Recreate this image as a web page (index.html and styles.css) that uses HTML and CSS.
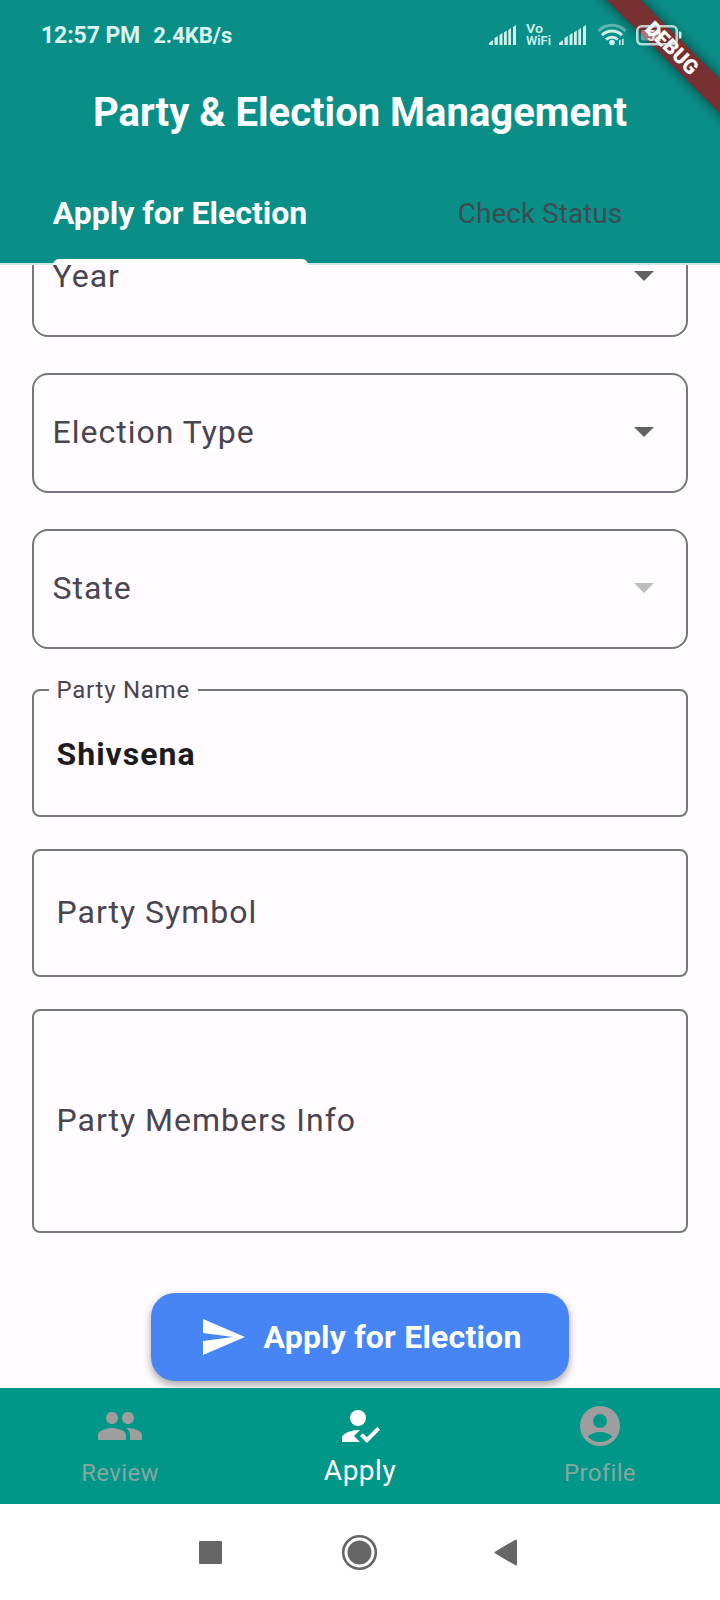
FILE: index.html
```html
<!DOCTYPE html>
<html lang="en">
<head>
<meta charset="utf-8">
<title>Party &amp; Election Management</title>
<link rel="stylesheet" href="styles.css">
</head>
<body>
<div class="screen">
  <header class="header">
    <div class="status">
      <span class="status-text time">12:57 PM</span>
      <span class="status-text speed">2.4KB/s</span>
      <svg class="status-icons" width="200" height="26" viewBox="0 0 200 26" fill="#cfeeea">
        <path d="M1 22v-2l4-3v5zM6.500 22v-7l3.300-2v9zM11.500 22V12l3-2v12zM16 22V9.500l2.800-2V22zM20.300 22V7l2.700-2v17zM25 22V4l3-2v20z"/>
        <text class="vo" x="38" y="10" textLength="17" lengthAdjust="spacingAndGlyphs">Vo</text>
        <text class="vo" x="38" y="22" textLength="25" lengthAdjust="spacingAndGlyphs">WiFi</text>
        <path transform="translate(70 0)" d="M1 22v-2l4-3v5zM6.500 22v-7l3.300-2v9zM11.500 22V12l3-2v12zM16 22V9.500l2.800-2V22zM20.300 22V7l2.700-2v17zM25 22V4l3-2v20z"/>
        <g fill="none" stroke="#cfeeea" stroke-width="3">
          <path d="M110.500 8a19 19 0 0 1 27 0" stroke="#5fb8b0"/>
          <path d="M114 12.300a14 14 0 0 1 20 0"/>
          <path d="M118 16.500a9 9 0 0 1 12 0"/>
        </g>
        <circle cx="124" cy="19.500" r="2.800"/>
        <path d="M131 17h1.600v5H131zM134 16h1.600v6H134z"/>
      </svg>
    </div>
    <h1 class="title">Party &amp; Election Management</h1>
    <nav class="tabs">
      <div class="tab active"><span>Apply for Election</span></div>
      <div class="tab"><span>Check Status</span></div>
    </nav>
  </header>
  <main class="form">
    <div class="field select first"><span>Year</span><i class="arrow"></i></div>
    <div class="field select"><span>Election Type</span><i class="arrow"></i></div>
    <div class="field select"><span>State</span><i class="arrow disabled"></i></div>
    <fieldset class="field input named"><legend>Party Name</legend><b>Shivsena</b></fieldset>
    <div class="field input"><span>Party Symbol</span></div>
    <div class="field input area"><span>Party Members Info</span></div>
    <button class="submit">
      <svg width="48" height="48" viewBox="0 0 24 24" fill="#fff"><path d="M2.010 21 23 12 2.010 3 2 10l15 2-15 2z"/></svg>
      <span>Apply for Election</span>
    </button>
  </main>
  <nav class="bottom">
    <div class="item">
      <svg width="48" height="48" viewBox="0 0 24 24"><path d="M16 11c1.660 0 2.990-1.340 2.990-3S17.660 5 16 5s-3 1.340-3 3 1.340 3 3 3zm-8 0c1.660 0 2.990-1.340 2.990-3S9.660 5 8 5 5 6.340 5 8s1.340 3 3 3zm0 2c-2.330 0-7 1.170-7 3.500V19h14v-2.500c0-2.330-4.670-3.500-7-3.500zm8 0c-.29 0-.62.020-.97.050 1.160.84 1.970 1.970 1.970 3.450V19h6v-2.500c0-2.330-4.670-3.500-7-3.500z"/></svg>
      <span>Review</span>
    </div>
    <div class="item on">
      <svg width="48" height="48" viewBox="0 0 24 24"><circle cx="11" cy="8" r="4"/><path d="M12 20H3v-2c0-2.660 5.330-4 8-4l1 .05L9 17zM15.470 20.500 12 17l1.400-1.410 2.070 2.080 5.130-5.170 1.400 1.410z"/></svg>
      <span>Apply</span>
    </div>
    <div class="item">
      <svg width="48" height="48" viewBox="0 0 24 24"><path fill-rule="evenodd" d="M12 2a10 10 0 1 0 0 20 10 10 0 0 0 0-20zm0 4a3.500 3.500 0 1 1 0 7 3.500 3.500 0 0 1 0-7zm0 14c-2.030 0-4.430-.82-6.140-2.880a9.950 9.950 0 0 1 12.280 0C16.430 19.180 14.030 20 12 20z"/></svg>
      <span>Profile</span>
    </div>
  </nav>
  <footer class="system">
    <svg width="720" height="96" viewBox="0 0 720 96" fill="#666">
      <rect x="199" y="37" width="23" height="23" rx="1"/>
      <circle cx="359.500" cy="48.500" r="12"/>
      <circle cx="359.500" cy="48.500" r="16.300" fill="none" stroke="#666" stroke-width="2.600"/>
      <path d="M495.500 48.500 516 36.500v24z" stroke="#666" stroke-width="2" stroke-linejoin="round"/>
    </svg>
  </footer>
  <div class="corner"><div class="ribbon">DEBUG</div></div>
  <svg class="battery" width="48" height="22" viewBox="0 0 48 22">
    <rect x="2.300" y="2.300" width="39.500" height="18" rx="4.500" fill="none" stroke="#dff5f2" stroke-width="2.600" opacity=".8"/>
    <rect x="6" y="6" width="19" height="10.500" rx="2" fill="#fff" opacity=".35"/>
    <text x="12" y="16.500">51</text>
    <path d="M44 7.500h1q1.500 0 1.500 1.500v4q0 1.500-1.500 1.500h-1z" fill="#cfeeea"/>
  </svg>
</div>
</body>
</html>
```

FILE: styles.css
```css
* { box-sizing: border-box; }
body { margin: 0; font-family: Roboto, sans-serif; }
.screen {
  position: relative; width: 720px; height: 1600px; overflow: hidden;
  display: flex; flex-direction: column; background: #fffbff;
}
.header {
  flex: none; height: 265px; background: #0a8f88; color: #fff;
  border-bottom: 2px solid #cbe9ea; display: flex; flex-direction: column;
}
.status { height: 72px; padding: 0 32px 0 41px; display: flex; align-items: center; }
.status-text { font-size: 23px; line-height: 28px; margin-top: 2px; font-weight: 700; letter-spacing: -.1px; color: #d8f5f2; white-space: nowrap; }
.speed { margin-left: 13px; font-size: 22px; letter-spacing: 0; }
.status-icons { margin-left: auto; margin-top: 1px; }
.vo { font: 600 12px Roboto, sans-serif; }
.title { margin: 0; height: 80px; line-height: 85px; text-align: center; font-size: 40px; font-weight: 700; white-space: nowrap; }
.tabs { height: 113px; display: grid; grid-template-columns: 1fr 1fr; flex: none; }
.tab { display: flex; justify-content: center; line-height: 127px; font-size: 28px; color: #3b4d53; white-space: nowrap; }
.tab.active { font-size: 32px; line-height: 126px; font-weight: 700; color: #fff; }
.tab.active span {
  height: 113px;
  position: relative;
}
.tab.active span::after {
  content: ""; position: absolute; left: 0; right: -1px; bottom: -2px; height: 6px;
  background: #fff; border-radius: 6px 6px 0 0;
}
.form { flex: none; height: 1123px; overflow: hidden; padding: 0 32px; display: flex; flex-direction: column; }
.field {
  flex: none; border: 2px solid #7a757f; color: #49454f; font-size: 32px; letter-spacing: 1px;
  display: flex; align-items: center; margin: 0;
}
.select { height: 120px; border-radius: 16px; margin-bottom: 36px; padding: 0 32px 2px 18.500px; justify-content: space-between; }
.first { margin-top: -48px; }
.arrow { border: 10px solid transparent; border-top-color: #616161; border-bottom: 0; }
.arrow.disabled { border-top-color: #bdbdbd; }
.input { height: 128px; border-radius: 8px; padding: 0 22.500px 2px; margin-bottom: 32px; }
.named { display: block; height: 141px; margin-top: -9px; padding: 0 15px; }
.named legend { font-size: 24px; line-height: 28px; padding: 0 8px 0 7.500px; letter-spacing: .75px; }
.named b { display: block; font-weight: 700; color: #1c1b1f; padding-left: 7.500px; line-height: 38px; margin-top: 31px; letter-spacing: 1px; }
.area { height: 224px; margin-bottom: 60px; }
.submit {
  align-self: center; flex: none; width: 418px; height: 88px; border: 0; border-radius: 24px; background: #4785f5;
  color: #fff; font: 700 32px Roboto, sans-serif; letter-spacing: .2px; display: flex; align-items: center; justify-content: center; gap: 16px;
  box-shadow: 0 4px 8px rgba(0,0,0,.35); padding: 0 0 0 1px; white-space: nowrap;
}
.bottom { flex: none; height: 116px; background: #009688; display: grid; grid-template-columns: repeat(3, 1fr); }
.item { display: flex; flex-direction: column; align-items: center; padding-top: 14px; color: #84a7a2; fill: #9e9e9e; font-size: 24px; letter-spacing: .35px; }
.item span { line-height: 30px; margin-top: 8px; }
.on { color: #fff; fill: #fff; font-size: 28px; letter-spacing: .5px; }
.on span { margin-top: 6px; }
.system { height: 96px; background: #fff; }
.system svg { display: block; }
.corner { position: absolute; top: 0; right: 0; width: 160px; height: 160px; overflow: hidden; }
.ribbon {
  position: absolute; left: -18px; top: 36px; width: 260px; height: 24px; line-height: 25px; text-align: center;
  transform: rotate(45deg); background: #772f31; color: #fff; font-size: 20.400px; font-weight: 900;
  box-shadow: 0 0 14px rgba(0,0,0,.55);
}
.battery { position: absolute; left: 635px; top: 24px; }
.battery text { font: 700 14px Roboto, sans-serif; fill: #fff; opacity: .8; }
```
